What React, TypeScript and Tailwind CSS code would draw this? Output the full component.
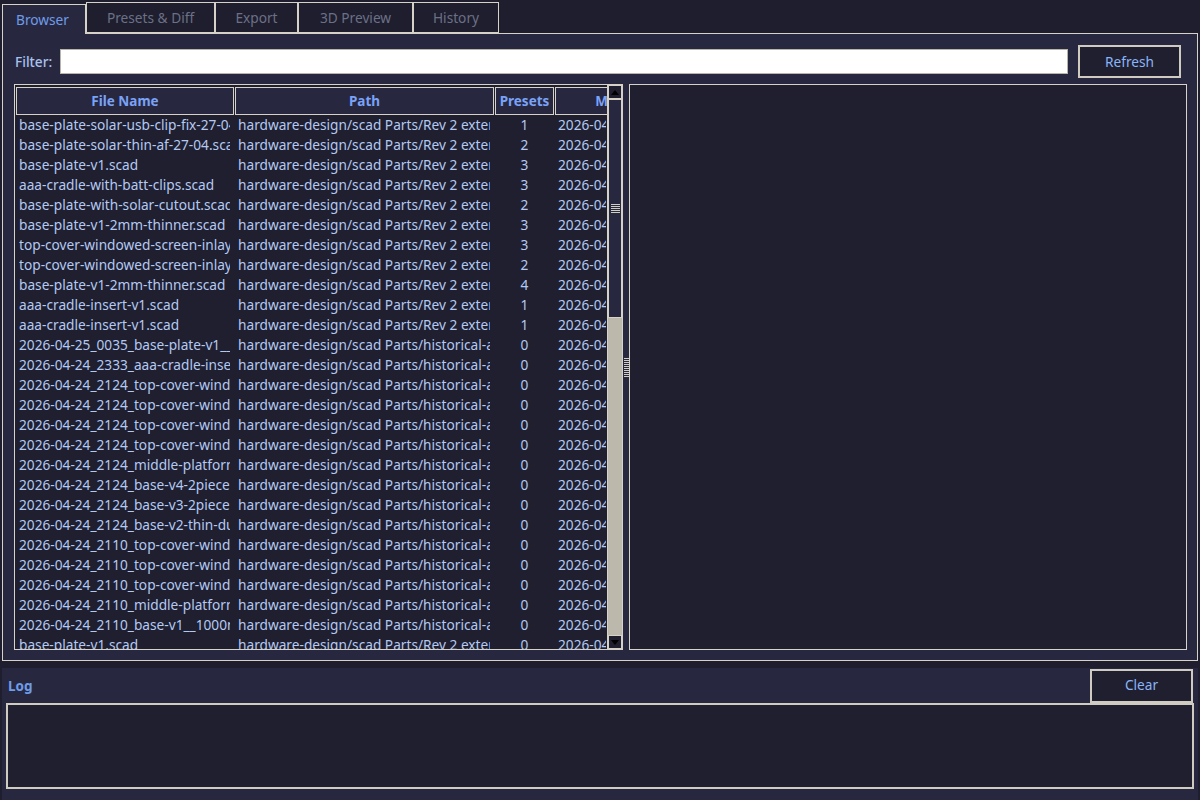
import React from 'react'

const rev2 = 'hardware-design/scad Parts/Rev 2 external'
const hist = 'hardware-design/scad Parts/historical-archive'

const rows: { name: string; path: string; presets: number; modified: string }[] = [
  { name: 'base-plate-solar-usb-clip-fix-27-04.scad', path: rev2, presets: 1, modified: '2026-04-27 14:32' },
  { name: 'base-plate-solar-thin-af-27-04.scad', path: rev2, presets: 2, modified: '2026-04-27 11:05' },
  { name: 'base-plate-v1.scad', path: rev2, presets: 3, modified: '2026-04-26 22:18' },
  { name: 'aaa-cradle-with-batt-clips.scad', path: rev2, presets: 3, modified: '2026-04-26 19:40' },
  { name: 'base-plate-with-solar-cutout.scad', path: rev2, presets: 2, modified: '2026-04-26 17:12' },
  { name: 'base-plate-v1-2mm-thinner.scad', path: rev2, presets: 3, modified: '2026-04-26 15:03' },
  { name: 'top-cover-windowed-screen-inlay-v2.scad', path: rev2, presets: 3, modified: '2026-04-26 12:47' },
  { name: 'top-cover-windowed-screen-inlay.scad', path: rev2, presets: 2, modified: '2026-04-26 10:21' },
  { name: 'base-plate-v1-2mm-thinner.scad', path: rev2, presets: 4, modified: '2026-04-25 21:56' },
  { name: 'aaa-cradle-insert-v1.scad', path: rev2, presets: 1, modified: '2026-04-25 18:30' },
  { name: 'aaa-cradle-insert-v1.scad', path: rev2, presets: 1, modified: '2026-04-25 16:09' },
  { name: '2026-04-25_0035_base-plate-v1__1000mAh.scad', path: hist, presets: 0, modified: '2026-04-25 00:35' },
  { name: '2026-04-24_2333_aaa-cradle-insert-v1.scad', path: hist, presets: 0, modified: '2026-04-24 23:33' },
  { name: '2026-04-24_2124_top-cover-windowed-a.scad', path: hist, presets: 0, modified: '2026-04-24 21:24' },
  { name: '2026-04-24_2124_top-cover-windowed-b.scad', path: hist, presets: 0, modified: '2026-04-24 21:24' },
  { name: '2026-04-24_2124_top-cover-windowed-c.scad', path: hist, presets: 0, modified: '2026-04-24 21:24' },
  { name: '2026-04-24_2124_top-cover-windowed-d.scad', path: hist, presets: 0, modified: '2026-04-24 21:24' },
  { name: '2026-04-24_2124_middle-platform.scad', path: hist, presets: 0, modified: '2026-04-24 21:24' },
  { name: '2026-04-24_2124_base-v4-2piece.scad', path: hist, presets: 0, modified: '2026-04-24 21:24' },
  { name: '2026-04-24_2124_base-v3-2piece.scad', path: hist, presets: 0, modified: '2026-04-24 21:24' },
  { name: '2026-04-24_2124_base-v2-thin-dual.scad', path: hist, presets: 0, modified: '2026-04-24 21:24' },
  { name: '2026-04-24_2110_top-cover-windowed-a.scad', path: hist, presets: 0, modified: '2026-04-24 21:10' },
  { name: '2026-04-24_2110_top-cover-windowed-b.scad', path: hist, presets: 0, modified: '2026-04-24 21:10' },
  { name: '2026-04-24_2110_top-cover-windowed-c.scad', path: hist, presets: 0, modified: '2026-04-24 21:10' },
  { name: '2026-04-24_2110_middle-platform.scad', path: hist, presets: 0, modified: '2026-04-24 21:10' },
  { name: '2026-04-24_2110_base-v1__1000mAh.scad', path: hist, presets: 0, modified: '2026-04-24 21:10' },
  { name: 'base-plate-v1.scad', path: rev2, presets: 0, modified: '2026-04-24 20:58' },
]

const tabs = ['Presets & Diff', 'Export', '3D Preview', 'History']
const tabWidths = ['w-[129px]', 'w-[83px]', 'w-[115px]', 'w-[86px]']

function Grip({ lines }: { lines: number }) {
  return (
    <div className="flex flex-col gap-px">
      {Array.from({ length: lines }).map((_, i) => (
        <div key={i} className="h-px bg-[#d0ccc2]" />
      ))}
    </div>
  )
}

export default function App() {
  return (
    <div className="w-[1200px] h-[800px] bg-[#1e1e2e] flex flex-col overflow-hidden font-['Noto_Sans',sans-serif] text-[13.7px]">
      {/* Tabs */}
      <div className="flex items-start h-[33px] px-[2px]">
        <div className="relative z-10 mt-[4px] h-[30px] w-[84px] bg-[#272840] border-l border-t border-r border-[#d6d2c8] flex items-center pl-[13px] pt-px text-[#6f9ce8]">
          Browser
        </div>
        {tabs.map((t, i) => (
          <div
            key={t}
            className={`mt-[2px] h-[31px] ${tabWidths[i]} bg-[#1e1e2e] border border-[#d6d2c8] flex items-center justify-center pt-px text-[#6c7086]`}
          >
            {t}
          </div>
        ))}
      </div>

      {/* Notebook panel */}
      <div className="mx-[2px] h-[628px] bg-[#272840] border border-[#d6d2c8] flex flex-col pt-[11px] pl-[11px] pr-[10px] pb-[10px]">
        {/* Filter row */}
        <div className="flex items-center h-[33px] pr-[6px]">
          <span className="w-[46px] shrink-0 pl-px pt-px text-[#a9c1ee] font-medium">Filter:</span>
          <div className="flex-1 h-[25px] bg-white border border-[#b8b4aa]" />
          <button className="ml-[10px] w-[103px] h-[33px] pt-px bg-[#1f1f2f] border-2 border-[#cfcbc1] text-[#8ab4f8]">
            Refresh
          </button>
        </div>

        {/* Browser split */}
        <div className="mt-[6px] flex flex-1 min-h-0">
          {/* Table */}
          <div className="w-[594px] border border-[#d6d2c8] bg-[#1f1f2f] pt-[2px] px-px overflow-hidden flex flex-col">
            <div className="flex gap-px h-[28px] shrink-0 text-[13.5px] font-bold text-[#7aa2f7]">
              <div className="w-[218px] shrink-0 border border-[#d6d2c8] bg-[#272840] flex items-center justify-center">File Name</div>
              <div className="w-[259px] shrink-0 border border-[#d6d2c8] bg-[#272840] flex items-center justify-center">Path</div>
              <div className="w-[59px] shrink-0 border border-[#d6d2c8] bg-[#272840] flex items-center justify-center">Presets</div>
              <div className="w-[140px] shrink-0 border border-[#d6d2c8] bg-[#272840] flex items-center justify-center">Modified</div>
            </div>
            <div className="flex-1 min-h-0 overflow-hidden pt-[0.5px]">
              {rows.map((r, i) => (
                <div key={i} className="flex gap-px h-[20px] items-center text-[#b4c9f2] whitespace-nowrap">
                  <div className="w-[218px] shrink-0 pl-[3px] pr-[4px]">
                    <div className="overflow-hidden">{r.name}</div>
                  </div>
                  <div className="w-[259px] shrink-0 pl-[3px] pr-[4px]">
                    <div className="overflow-hidden">{r.path}</div>
                  </div>
                  <div className="w-[59px] shrink-0 text-center">{r.presets}</div>
                  <div className="w-[140px] shrink-0 pl-[3px]">{r.modified}</div>
                </div>
              ))}
            </div>
          </div>

          {/* Scrollbar */}
          <div className="w-[15px] border-t border-b border-r border-[#d6d2c8] bg-[#bcb8ac] flex flex-col">
            <div className="h-[14px] bg-[#1f1f2f] border border-[#d6d2c8] flex items-center justify-center">
              <div className="w-0 h-0 border-l-[4px] border-r-[4px] border-b-[5px] border-l-transparent border-r-transparent border-b-black" />
            </div>
            <div className="h-[219px] bg-[#272840] border border-[#d6d2c8] flex items-center justify-center">
              <div className="w-[9px]"><Grip lines={5} /></div>
            </div>
            <div className="flex-1" />
            <div className="h-[14px] bg-[#1f1f2f] border border-[#d6d2c8] flex items-center justify-center">
              <div className="w-0 h-0 border-l-[4px] border-r-[4px] border-t-[5px] border-l-transparent border-r-transparent border-t-black" />
            </div>
          </div>

          {/* Sash */}
          <div className="w-[6px] flex items-center justify-center">
            <div className="w-[5px]"><Grip lines={10} /></div>
          </div>

          {/* Right pane */}
          <div className="flex-1 bg-[#1f1f2f] border border-[#d6d2c8]" />
        </div>
      </div>

      {/* Log */}
      <div className="mt-[7px] mx-[2px] flex-1 bg-[#272840] flex flex-col px-[4px] pb-[11px]">
        <div className="flex items-center justify-between h-[35px]">
          <span className="ml-[2px] pt-px text-[13.5px] font-bold text-[#6f9ce8]">Log</span>
          <button className="w-[103px] h-[34px] mr-px bg-[#1f1f2f] border-2 border-[#cfcbc1] text-[#8ab4f8]">
            Clear
          </button>
        </div>
        <div className="flex-1 bg-[#1f1f2f] border-2 border-[#cfcbc1]" />
      </div>
    </div>
  )
}
